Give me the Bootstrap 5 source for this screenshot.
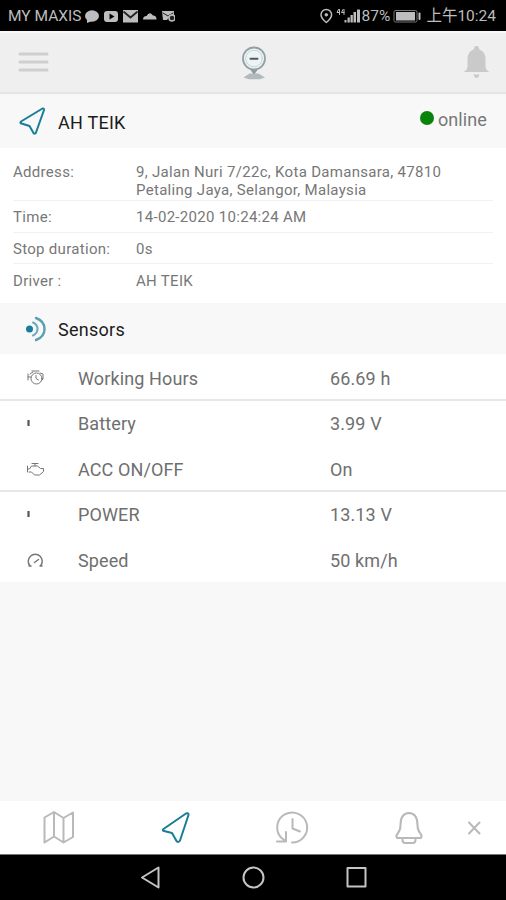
<!DOCTYPE html>
<html lang="en">
<head>
<meta charset="utf-8">
<meta name="viewport" content="width=device-width, initial-scale=1">
<title>AH TEIK</title>
<link href="https://cdn.jsdelivr.net/npm/bootstrap@5.3.0/dist/css/bootstrap.min.css" rel="stylesheet">
<style>
body{font-family:Roboto,"Noto Sans CJK TC",sans-serif;height:900px;overflow:hidden;background:#f8f8f8;color:#6f6f6f;line-height:1}
svg{display:block;flex:none;fill:none;stroke:currentColor;stroke-linecap:round;stroke-linejoin:round}
.status{height:31px;background:#000;color:#bdbdbd;padding:2px 10px 0 8px;font-size:15.5px}
.status span{white-space:nowrap}
.topbar{height:63px;background:#efefef;border-top:2px solid #f8f8f8;border-bottom:2px solid #e4e4e4;padding:0 16px 0 18px}
.device{height:54px;padding:0 19px 0 19px}
.heading{font-size:18px;color:#1c1c1c;letter-spacing:.25px}
.dot{width:14px;height:14px;background:#0a830a;margin-bottom:3px}
.online{font-size:18px;color:#777;letter-spacing:.1px;margin-top:2px}
.details{height:155px;padding:7px 13px 0;font-size:15px;color:#777;letter-spacing:.3px}
.detail{height:31.7px;border-bottom:1px solid #f1f1f1;padding-top:2px}
.detail.addr{height:46px;line-height:18px}
.detail:last-child{border:0}
.detail>div:first-child{width:123px;flex:none}
.sensors{height:51px;padding:3px 24px 0}
.sensor{height:45px;padding-left:26px;font-size:18px;padding-top:2px;letter-spacing:.12px}
.sensor.line{border-bottom:2px solid #e7e7e7;height:47px;padding-top:5px}
.sensor.line + .sensor{height:44px}
.sensor:last-child{height:46px;padding-top:4px}
.sensor svg{width:20px;margin-top:-3px;color:#777}
.sensor .lbl{width:252px;margin-left:32px}
.tabs{height:53px;color:#b9b9b9}
.sysnav{height:46px;background:#000;color:#c4c4c4;border-top:1px solid #777}
.teal{color:#187d96}
.logo{margin-right:3px}
</style>
<script src="https://cdn.jsdelivr.net/npm/bootstrap@5.3.0/dist/js/bootstrap.bundle.min.js"></script>
</head>
<body class="d-flex flex-column">
<div class="status d-flex align-items-center justify-content-between">
  <div class="d-flex align-items-center">
    <span>MY MAXIS</span>
    <svg width="94" height="18" viewBox="81 8 94 18">
      <g fill="#bdbdbd" stroke="none"><ellipse cx="92" cy="16" rx="7" ry="5.8"/><path d="M87 19l0 4 5-2z"/>
      <rect x="104" y="11" width="14" height="11" rx="3"/><path fill="#000" d="M109.500 13.500v6l5-3z"/>
      <rect x="123" y="10" width="15" height="12.500"/><path d="M124 12l6.500 5.500L137 12" fill="none" stroke="#222" stroke-width="1.800"/>
      <path d="M143 19.500q0-3.500 3.500-3.500 3-5 6.500-.5 3.500 0 3.500 4z"/>
      <path d="M162 11h12v5h-4l-3 4h-4z"/><path d="M163 13l5 3 5-3" fill="none" stroke="#222"/><circle cx="172" cy="18" r="3" fill="#222" stroke="#bdbdbd" stroke-width="1.500"/></g>
    </svg>
  </div>
  <div class="d-flex align-items-center">
    <svg width="43" height="18" viewBox="319 8 43 18">
      <path d="M326.300 22.500q-5.300-4.500-5.300-7.800a5.300 5.300 0 0 1 10.600 0q0 3.300-5.300 7.800z" stroke-width="1.500"/><circle cx="326.300" cy="14.800" r="1.300" fill="currentColor"/>
      <path d="M338.500 9.500l-1.500 3h2.500M339.500 9.500v5M343 9.500l-1.500 3h2.500M344 9.500v5" stroke-width="1"/>
      <g fill="currentColor" stroke="none"><path d="M344.500 20h2v2.500h-2zM347.500 17.500h2.300v5h-2.300zM350.500 15h2.300v7.500h-2.300zM353.500 12h2.500v10.500h-2.500zM357 9.500h3v13h-3z"/></g>
    </svg>
    <span>87%</span>
    <svg width="36" height="18" viewBox="391 8 36 18"><rect x="395" y="10.500" width="23" height="11.500" rx="1.500" stroke="#777" stroke-width="1"/><path d="M397 12h19v8.500h-19z" fill="currentColor" stroke="none"/><path d="M420.500 13.500v5.500" stroke-width="2"/></svg>
    <span>上午10:24</span>
  </div>
</div>
<header class="topbar d-flex align-items-center justify-content-between">
  <svg width="31" height="24" viewBox="0 1 31 24" stroke-width="3"><path stroke="#cfcfcf" d="M2 4h27M2 12h27M2 20h27"/></svg>
  <svg width="30" height="40" viewBox="239 43 30 40" class="logo"><path d="M243.500 77.500l6-4h9l6.500 4-5 1.800h-11z" fill="#b3babb" stroke="none"/><circle cx="254" cy="58.500" r="11" fill="#eef3f3" stroke="#93a1a4" stroke-width="1.800"/><circle cx="254" cy="58.500" r="8.300" stroke="#c3d6d8"/><path d="M250.500 58.700h7" stroke="#4c5b60" stroke-width="2"/><path d="M251 70l3 4 3-4" fill="#8d9b9e" stroke="#8d9b9e"/></svg>
  <svg width="28" height="36" viewBox="-.5 1 28 36"><path d="M1 28q4-2 4-6v-7q0-7 6-9.500l1.500-3.500h3L17 5.500q6 2.500 6 9.500v7q0 4 4 6zM11 30.500h6q-1 3.500-3 3.500t-3-3.500z" fill="#cacaca" stroke="none"/></svg>
</header>
<section class="device d-flex align-items-center">
  <svg class="teal" width="27" height="30" viewBox="0 0 27 30" stroke-width="2"><path d="M23.500 2.500 2 15.500q-1.500 1.500.5 2l8 2.500 4 7q1.500 1.500 2.500-.5L25 4q.3-2-1.500-1.500z"/></svg>
  <div class="heading ms-2 ps-1 pt-1">AH TEIK</div>
  <div class="ms-auto mb-1 d-flex align-items-center gap-1"><i class="dot rounded-circle"></i><span class="online">online</span></div>
</section>
<section class="details bg-white">
  <div class="detail addr d-flex pt-2"><div>Address:</div><div>9, Jalan Nuri 7/22c, Kota Damansara, 47810<br>Petaling Jaya, Selangor, Malaysia</div></div>
  <div class="detail d-flex align-items-center"><div>Time:</div><div>14-02-2020 10:24:24 AM</div></div>
  <div class="detail d-flex align-items-center"><div>Stop duration:</div><div>0s</div></div>
  <div class="detail d-flex align-items-center"><div>Driver :</div><div>AH TEIK</div></div>
</section>
<section class="sensors d-flex align-items-center">
  <svg class="teal" width="24" height="28" viewBox="24 316 24 28"><circle cx="29.500" cy="329" r="3.500" fill="currentColor" stroke="none"/><path d="M33 322.500q4.500 2 4.500 6.500t-4.500 6.500" stroke="#6caabc" stroke-width="2"/><path d="M36 318q8.500 3 8.500 11T36 340" stroke="#5b9fb4" stroke-width="2.400"/></svg>
  <div class="heading ms-2 ps-0">&#8202;Sensors</div>
</section>
<section class="bg-white">
  <div class="sensor line d-flex align-items-center"><svg height="18" viewBox="26 369 20 18"><circle cx="36.500" cy="378.500" r="5.500"/><path d="M28 374v6M28 377h3M30 374l3-2M32 371h7M40 373l3 1v5l-2 2M36 375.500v3l2.500 1.500"/></svg><div class="lbl">Working Hours</div><div>66.69 h</div></div>
  <div class="sensor d-flex align-items-center"><svg height="18" viewBox="26 414 20 18"><path d="M28.500 420v6" stroke="#555" stroke-width="2.200" stroke-linecap="butt"/></svg><div class="lbl">Battery</div><div>3.99 V</div></div>
  <div class="sensor line d-flex align-items-center"><svg height="18" viewBox="26 459 20 18"><path d="M27.500 465v6M27.500 468h2l2-3h6l3 2.500h3v3l-4 3.500h-5l-3-3h-2.500M32 462.500h6M35 462.500v2.500"/></svg><div class="lbl">ACC ON/OFF</div><div>On</div></div>
  <div class="sensor d-flex align-items-center"><svg height="18" viewBox="26 505 20 18"><path d="M28.500 511v6" stroke="#555" stroke-width="2.200" stroke-linecap="butt"/></svg><div class="lbl">POWER</div><div>13.13 V</div></div>
  <div class="sensor d-flex align-items-center"><svg height="18" viewBox="26 550 20 18" stroke-width="1.500"><path d="M30 565a7 7 0 1 1 10.500 0M29 565h2M40 565h2M34.500 561.500l4-3"/></svg><div class="lbl">Speed</div><div>50 km/h</div></div>
</section>
<nav class="tabs bg-white d-flex align-items-center mt-auto">
  <svg width="506" height="53" viewBox="0 801 506 53" stroke-width="2">
    <path d="M44.500 817.500l9.500-5.500 9.500 6 9.500-5.500V837l-9.500 5.500-9.500-6-9.500 6zM54 812v24.500M63.500 818v24.500"/>
    <path class="teal" d="M186 813.500 163.500 829q-1.500 1.500.5 2l8 2 4.500 8q2 2 3.500-.5L188.500 815q.3-2.500-2.500-1.500z"/>
    <path d="M285.500 841l-4.500-3.500a15 15 0 1 1 11 5M277 841.500h9v-9.500M292.500 819v9.500l7.500 3"/>
    <path d="M397 838q-1.500-2.500 1-5 2.500-3 2.500-8 0-11.500 8.500-12 8.500.5 8.500 12 0 5 2.500 8 2.500 2.500 1 5zM402.500 838v2q0 3 3 3h7q3 0 3-3v-2"/>
    <path d="M469 822.500l10.500 11M479.500 822.500l-10.500 11"/>
  </svg>
</nav>
<footer class="sysnav d-flex align-items-center">
  <svg width="506" height="45" viewBox="0 855 506 45" stroke-width="2"><path d="M142 877.500l16.500-10v20z"/><circle cx="253.500" cy="877.500" r="10"/><rect x="347.500" y="868" width="18" height="18.500"/></svg>
</footer>
</body>
</html>
